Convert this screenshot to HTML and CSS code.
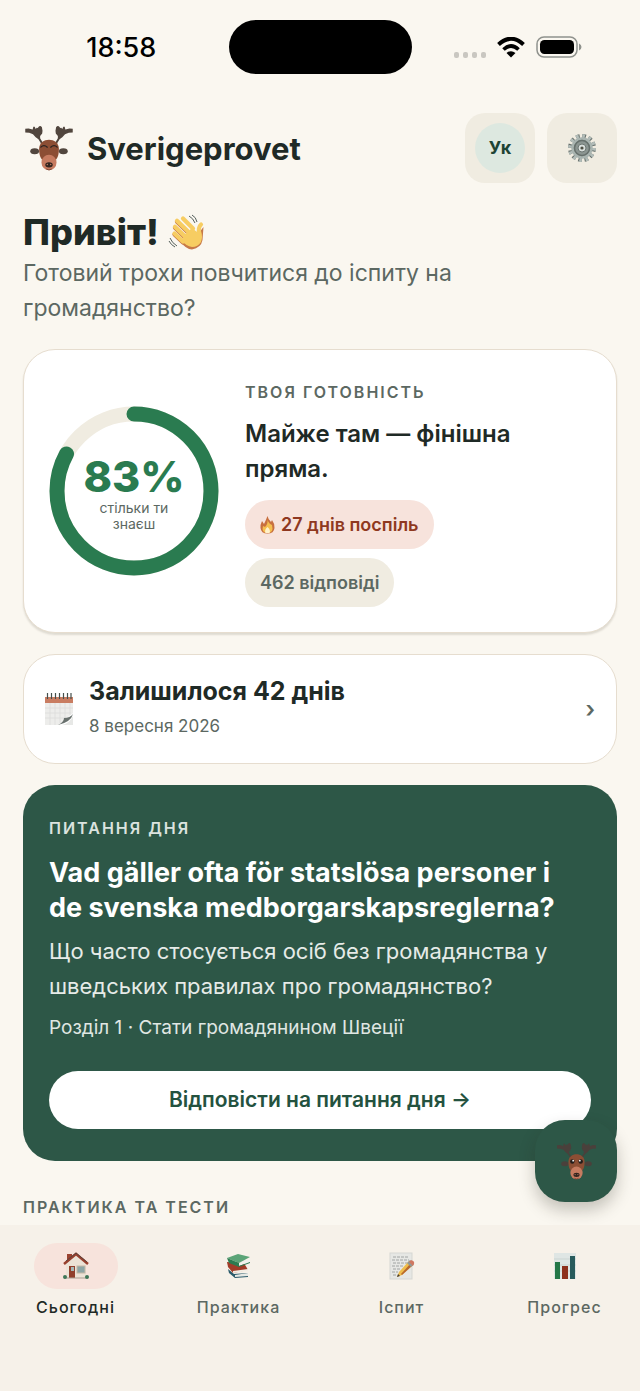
FILE: index.html
```html
<!DOCTYPE html>
<html lang="uk">
<head>
    <meta charset="UTF-8">
    <meta name="viewport" content="width=device-width, initial-scale=1.0">
    <title>Sverigeprovet</title>
    <link rel="stylesheet" href="styles.css">
</head>
<body>
    <svg class="defs" aria-hidden="true">
        <symbol id="moose-head" viewBox="0 0 140 132">
            <path id="antler" fill="var(--antler)" d="M0 8 L10 7 L22 10 L24 2 L28 2 L31 9 L34 5 L37 6 L41 1 L45 0 L49 3 L51 14 L50 22 L44 29 L44 36 L51 48 L47 52 L39 39 L31 33 L23 24 L12 20 L0 19 Z"/>
            <use href="#antler" transform="translate(140 0) scale(-1 1)"/>
            <ellipse cx="28" cy="74" rx="13" ry="9" fill="var(--antler)"/>
            <ellipse cx="112" cy="74" rx="13" ry="9" fill="var(--antler)"/>
            <path fill="#8c4e34" d="M41 67 C41 31 99 31 99 67 C99 87 95 106 70 106 C45 106 41 87 41 67 Z"/>
            <ellipse cx="70" cy="107" rx="22" ry="23" fill="#c67b60"/>
            <ellipse cx="70" cy="114" rx="11" ry="8" fill="#33251f"/>
            <circle cx="65" cy="113" r="2" fill="#c67b60"/>
            <circle cx="75" cy="113" r="2" fill="#c67b60"/>
            <path d="M62 126 Q70 132 78 126" fill="none" stroke="#5b2c20" stroke-width="2"/>
        </symbol>
    </svg>

    <div class="app">
        <div class="status-bar">
            <div class="status-time">18:58</div>
            <div class="island"></div>
            <div class="status-icons">
                <svg width="32" height="6" viewBox="0 0 32 6" fill="#c9c7c1">
                    <rect width="5" height="6" rx="2"/><rect x="9" width="5" height="6" rx="2"/>
                    <rect x="18" width="5" height="6" rx="2"/><rect x="27" width="5" height="6" rx="2"/>
                </svg>
                <svg class="wifi" width="28" height="21" viewBox="0 0 28 21">
                    <path d="M1.500 7.500 Q14 -4 26.500 7.500" fill="none" stroke="#000" stroke-width="4"/>
                    <path d="M6.500 12.500 Q14 5.500 21.500 12.500" fill="none" stroke="#000" stroke-width="3.700"/>
                    <path d="M9.500 16 Q14 12.500 18.500 16 L14 20.500 Z"/>
                </svg>
                <svg width="46" height="22" viewBox="0 0 46 22">
                    <rect x="1" y="1" width="40" height="20" rx="7" fill="none" stroke="#8f928d" stroke-width="1.500"/>
                    <rect x="4" y="4" width="34" height="14" rx="4.500"/>
                    <path d="M43 7.500 Q45.500 8.500 45.500 11 T43 14.500 Z" fill="#8f928d"/>
                </svg>
            </div>
        </div>

        <header class="header">
            <div class="brand">
                <svg class="moose" width="48" height="45" viewBox="0 0 140 132">
                    <use href="#moose-head"/>
                    <path d="M46 62 Q55 53 65 62 M75 62 Q85 53 94 62" fill="none" stroke="#2c2522" stroke-width="4" stroke-linecap="round"/>
                </svg>
                <span class="brand-name">Sverigeprovet</span>
            </div>
            <div class="header-actions">
                <button class="icon-button" aria-label="Мова"><span class="lang">Ук</span></button>
                <button class="icon-button" aria-label="Налаштування">
                    <svg width="30" height="30" viewBox="0 0 30 30">
                        <circle cx="15" cy="15" r="12" fill="none" stroke="#66706c" stroke-width="4" stroke-dasharray="3.600 2.683"/>
                        <circle cx="15" cy="15" r="12" fill="none" stroke="#b3bdb9" stroke-width="4" stroke-dasharray="2.600 3.683"/>
                        <circle cx="15" cy="15" r="9.500" fill="#8b9591" stroke="#a9b4b0" stroke-width="2.500"/>
                        <circle cx="15" cy="15" r="7.500" fill="#8b9591" stroke="#66706c" stroke-width="1.500"/>
                        <circle cx="15" cy="15" r="4" fill="#d9dfdc" stroke="#6d7773"/>
                        <circle cx="15" cy="15" r="1.600" fill="#4d4f43"/>
                    </svg>
                </button>
            </div>
        </header>

        <main class="content">
            <h1 class="greeting">
                Привіт!
                <svg width="36" height="36" viewBox="0 0 36 36">
                    <path d="M12 27 Q18 35.500 24 35.500 Q33 34 34.500 26 L35.500 13 L30 20 Z" fill="#c77a48"/>
                    <g stroke="#c77a48" stroke-width="4.200" stroke-linecap="round">
                        <path d="M6.500 20.500 L15 28.500"/><path d="M7 13.700 L17 23.500"/><path d="M9 7.700 L20 18.500"/>
                    </g>
                    <g stroke="#f7cd62" stroke-width="4.200" stroke-linecap="round" fill="none">
                        <path d="M6.500 19.500 L15 27.500"/><path d="M7 12.700 L17 22.500"/><path d="M9 6.700 L20 17.500"/><path d="M15 4.500 L25 14.500"/>
                        <path d="M33 10.500 Q30 13 31 21"/>
                    </g>
                    <path d="M14 27 L16 21 L24 14 L29 18 L33 17 Q35 23 33 28 Q30 33 24 33 Q18 32 14 27 Z" fill="#f7cd62"/>
                    <path d="M21 2 Q25 4 27 9 M24 1 Q28 3 29 8 M2 24 Q4 29 9 32 M1 27 Q3 31 7 33" fill="none" stroke="#55605c" stroke-width="1"/>
                </svg>
            </h1>
            <p class="subtitle">Готовий трохи повчитися до іспиту на громадянство?</p>

            <section class="card readiness">
                <div class="ring">
                    <svg viewBox="0 0 170 170">
                        <circle cx="85" cy="85" r="77" fill="none" stroke="#f0ece1" stroke-width="15"/>
                        <circle cx="85" cy="85" r="77" fill="none" stroke="#2a7b50" stroke-width="15" stroke-linecap="round" pathLength="100" stroke-dasharray="83 100" transform="rotate(-90 85 85)"/>
                    </svg>
                    <div class="ring-text">
                        <div class="ring-value">83%</div>
                        <div class="ring-label">стільки ти знаєш</div>
                    </div>
                </div>
                <div class="readiness-info">
                    <div class="eyebrow">Твоя готовність</div>
                    <h2 class="readiness-title">Майже там — фінішна пряма.</h2>
                    <div class="chips">
                        <span class="chip chip-streak">
                            <svg width="15" height="18" viewBox="0 0 15 18">
                                <path d="M7.500 0 Q8 3 11 6 L12 4 Q15 8 14.500 12 Q14 17.500 7.500 17.500 Q1 17.500 .500 12 Q0 9 2 5 L4 8 Q6 4 7.500 0 Z" fill="#c8703f"/>
                                <path d="M7.500 4 Q9 8 12 9 Q14 17 7.500 17 Q1 17 3 10 L5 11 Q8 8 7.500 4 Z" fill="#f5bf50"/>
                                <path d="M7.500 11 Q11 14 9.500 17 L5.500 17 Q4 14 7.500 11 Z" fill="#fff2cb"/>
                            </svg>
                            27 днів поспіль
                        </span>
                        <span class="chip">462 відповіді</span>
                    </div>
                </div>
            </section>

            <button class="card countdown">
                <svg width="28" height="32" viewBox="0 0 28 32">
                    <path d="M0 4 H28 V20 L14 32 H0 Z" fill="#ededeb"/>
                    <path d="M0 4 H28 V10 H0 Z" fill="#c97d62"/>
                    <path d="M0 15 H28 M0 20 H26 M0 25 H20 M5 10 V32 M10 10 V32 M15 10 V30 M20 10 V26 M25 10 V22" stroke="#dcdcda" stroke-width=".800"/>
                    <path d="M28 21 Q26 29 13 32 Q19 29 19 25 Q25 25 28 21 Z" fill="#69716e"/>
                    <path d="M28 23 Q25 30 17 32 H28 Z" fill="#e7e8e6"/>
                    <path d="M2.500 0 V6 M6.500 0 V6 M10.500 0 V6 M14.500 0 V6 M18.500 0 V6 M22.500 0 V6 M26 0 V6" stroke="#46504c" stroke-width="1.200"/>
                </svg>
                <span class="countdown-text">
                    <span class="countdown-title">Залишилося 42 днів</span>
                    <span class="countdown-date">8 вересня 2026</span>
                </span>
                <span class="chevron">›</span>
            </button>

            <section class="daily">
                <div class="eyebrow">Питання дня</div>
                <h2 class="daily-question" lang="sv">Vad gäller ofta för statslösa personer i de svenska medborgarskapsreglerna?</h2>
                <p class="daily-translation">Що часто стосується осіб без громадянства у шведських правилах про громадянство?</p>
                <p class="daily-chapter">Розділ 1 · Стати громадянином Швеції</p>
                <button class="daily-button">Відповісти на питання дня →</button>
            </section>

            <h2 class="eyebrow section-title">Практика та тести</h2>
        </main>

        <nav class="tab-bar">
            <button class="fab" aria-label="Помічник">
                <svg class="moose moose-dark" width="39" height="37" viewBox="0 0 140 132">
                    <use href="#moose-head"/>
                    <circle cx="55" cy="66" r="8" fill="#241d1b"/>
                    <circle cx="85" cy="66" r="8" fill="#241d1b"/>
                    <circle cx="58" cy="63" r="3" fill="#fff"/>
                    <circle cx="82" cy="63" r="3" fill="#fff"/>
                </svg>
            </button>
            <a class="tab active" href="#today">
                <span class="tab-icon">
                    <svg width="26" height="28" viewBox="0 0 26 28">
                        <path d="M4 2 H9 V10 H4 Z" fill="#9c4330"/>
                        <path d="M3 11 L13 3 L23 11 V26 H3 Z" fill="#ece2d6"/>
                        <path d="M1 12 L13 2 L25 12" fill="none" stroke="#993f2d" stroke-width="2.500"/>
                        <path d="M3 9 L13 1 L24 10" fill="none" stroke="#4b4440" stroke-width=".800"/>
                        <rect x="6" y="14" width="6" height="12" fill="#91402d"/>
                        <rect x="8" y="15" width="3" height="4" fill="#a5b9b8"/>
                        <rect x="14" y="14" width="8" height="7" fill="#8da5a5" stroke="#c5b8a6"/>
                        <path d="M1 26 H25" stroke="#a89f93"/>
                        <circle cx="2" cy="25" r="2" fill="#3e7658"/><circle cx="24" cy="25" r="2" fill="#3e7658"/>
                    </svg>
                </span>
                Сьогодні
            </a>
            <a class="tab" href="#practice">
                <span class="tab-icon">
                    <svg width="26" height="26" viewBox="0 0 26 26">
                        <path d="M2 16 L8 21 L22 20 V24 L9 25 L3 20 Z" fill="#2c5b6b"/>
                        <path d="M9 22 L22 20 V23 L9 24 Z" fill="#e5e8e4"/>
                        <path d="M1 9 L18 10 L22 17 L7 20 L2 14 Z" fill="#a13c28"/>
                        <path d="M7 18 L22 16 V18 L7 20 Z" fill="#f3eee5"/>
                        <path d="M1 5 L12 1 L24 4 L13 10 Z" fill="#5ba477"/>
                        <path d="M1 5 L13 10 V14 L3 10 Z" fill="#2b7b50"/>
                        <path d="M13 10 L24 6 V9 L13 13 Z" fill="#f1f3ee"/>
                        <path d="M13 13 L24 9 V10 L13 14 Z" fill="#2b7b50"/>
                    </svg>
                </span>
                Практика
            </a>
            <a class="tab" href="#exam">
                <span class="tab-icon">
                    <svg width="26" height="28" viewBox="0 0 26 28">
                        <rect x="1" y="1" width="22" height="26" fill="#e6e7e4" stroke="#d6d7d3"/>
                        <path d="M4 5 H19 M3 8 H20 M4 11 H18 M3 14 H15 M4 17 H12 M3 20 H9 M4 23 H8" stroke="#8f9592" stroke-width=".8" stroke-dasharray="3 1"/>
                        <path d="M10 20 L20 9 L24 13 L13 23 L8 25 Z" fill="#efbd4b"/>
                        <path d="M12 22 L22 11 L24 13 L13 23 Z" fill="#b8682e"/>
                        <path d="M18 11 L21 8 L25 12 L22 15 Z" fill="#8f9996"/>
                        <path d="M20 10 L22 8 Q26 9 25 12 L24 14 Z" fill="#d07861"/>
                        <path d="M8 25 L9 22 L11 24 Z" fill="#453b30"/>
                    </svg>
                </span>
                Іспит
            </a>
            <a class="tab" href="#progress">
                <span class="tab-icon">
                    <svg width="26" height="28" viewBox="0 0 26 28">
                        <rect x="2" y="1" width="22" height="26" fill="#dfe6e4"/>
                        <path d="M2 7 H24 M2 13 H24 M2 19 H24" stroke="#cbd5d2"/>
                        <rect x="3" y="10" width="5" height="17" fill="#247747"/>
                        <rect x="10" y="14" width="6" height="13" fill="#8d301c"/>
                        <rect x="18" y="4" width="5" height="23" fill="#285b5c"/>
                    </svg>
                </span>
                Прогрес
            </a>
        </nav>
    </div>
</body>
</html>
```
FILE: styles.css
```css
* {
    box-sizing: border-box;
}
body {
    margin: 0;
    font-family: Inter, 'Liberation Sans', sans-serif;
    background: #faf7f0;
    color: #1f2a26;
}
h1, h2, p {
    margin: 0;
}
button {
    font-family: inherit;
    border: none;
    padding: 0;
    cursor: pointer;
}
svg {
    flex-shrink: 0;
}
.defs {
    display: block;
    width: 0;
    height: 0;
}
.app {
    display: flex;
    flex-direction: column;
    min-height: 100vh;
}
.moose {
    --antler: #51463e;
}
.moose-dark {
    --antler: #4a403b;
}

/* Status bar */
.status-bar {
    display: grid;
    grid-template-columns: 1fr 183px 1fr;
    align-items: center;
    padding-top: 20px;
}
.status-time {
    padding-left: 14px;
    text-align: center;
    font-size: 27px;
    font-weight: 500;
    color: #000;
}
.island {
    height: 54px;
    border-radius: 27px;
    background: #000;
}
.status-icons {
    display: flex;
    justify-content: center;
    align-items: center;
    gap: 11px;
    padding-right: 16px;
}
.status-icons svg:first-child {
    align-self: flex-end;
}

/* Header */
.header {
    display: flex;
    justify-content: space-between;
    align-items: center;
    padding: 39px 23px 0;
}
.brand {
    display: flex;
    align-items: center;
    gap: 14px;
    padding-left: 2px;
}
.brand-name {
    font-size: 31px;
    font-weight: 700;
}
.header-actions {
    display: flex;
    gap: 12px;
}
.icon-button {
    display: flex;
    align-items: center;
    justify-content: center;
    width: 70px;
    height: 70px;
    border-radius: 20px;
    background: #f0ece1;
}
.lang {
    width: 50px;
    border-radius: 50%;
    background: #dde8e0;
    color: #1d4434;
    font-size: 18px;
    font-weight: 700;
    line-height: 50px;
}

/* Content */
.content {
    flex: 1;
    padding: 28px 23px 0;
}
.greeting {
    display: flex;
    align-items: center;
    gap: 9px;
    font-size: 36px;
    font-weight: 800;
    line-height: 42px;
}
.subtitle {
    margin: 3px 0 23px;
    font-size: 23px;
    line-height: 35px;
    color: #5c6862;
}
.card {
    width: 100%;
    background: #fff;
    border: 1px solid #e6ddcf;
    border-radius: 32px;
}
.eyebrow {
    font-size: 16px;
    font-weight: 600;
    line-height: 35px;
    letter-spacing: 2px;
    text-transform: uppercase;
    color: #5c6862;
}
.readiness {
    display: flex;
    align-items: center;
    gap: 26px;
    padding: 25px;
    box-shadow: 0 2px 2px rgba(60, 50, 30, 0.14);
}
.ring {
    position: relative;
    flex-shrink: 0;
    width: 170px;
    height: 170px;
}
.ring-text {
    position: absolute;
    inset: 0;
    display: flex;
    flex-direction: column;
    align-items: center;
    justify-content: center;
    gap: 4px;
    padding-top: 5px;
    text-align: center;
}
.ring-value {
    font-size: 43px;
    font-weight: 800;
    line-height: 40px;
    color: #2a7b50;
}
.ring-label {
    width: 90px;
    font-size: 14px;
    line-height: 16px;
    color: #5c6862;
}
.readiness-title {
    margin: 6px 0 14px;
    font-size: 24px;
    font-weight: 600;
    line-height: 35px;
}
.chips {
    display: flex;
    flex-direction: column;
    align-items: flex-start;
    gap: 9px;
}
.chip {
    display: flex;
    align-items: center;
    gap: 6px;
    padding: 0 15px;
    border-radius: 25px;
    background: #f0ece1;
    color: #5c6862;
    font-size: 18px;
    font-weight: 600;
    line-height: 49px;
}
.chip-streak {
    background: #f7e3dc;
    color: #8f3820;
}
.countdown {
    display: flex;
    align-items: center;
    gap: 16px;
    margin: 21px 0;
    padding: 19px 21px;
    color: #1f2a26;
    text-align: left;
}
.countdown-text {
    display: flex;
    flex-direction: column;
    flex: 1;
    line-height: 35px;
}
.countdown-title {
    font-size: 25px;
    font-weight: 700;
}
.countdown-date {
    font-size: 17px;
    color: #5c6862;
}
.chevron {
    font-size: 23px;
    font-weight: 600;
    color: #5c6862;
}

/* Question of the day */
.daily {
    padding: 26px 26px 32px;
    border-radius: 32px;
    background: #2d5747;
    color: #fff;
}
.daily .eyebrow {
    color: #dbe3df;
}
.daily-question {
    margin: 9px 0;
    font-size: 27px;
    font-weight: 700;
    line-height: 35px;
    text-wrap: balance;
}
.daily-translation {
    font-size: 22px;
    line-height: 35px;
    color: #e6ebe8;
}
.daily-chapter {
    margin: 6px 0 26px;
    font-size: 19px;
    line-height: 35px;
    color: #e0e7e3;
}
.daily-button {
    width: 100%;
    border-radius: 29px;
    background: #fff;
    color: #24523f;
    font-size: 21px;
    font-weight: 600;
    line-height: 58px;
}
.section-title {
    margin-top: 29px;
}

/* Tab bar */
.tab-bar {
    position: sticky;
    bottom: 0;
    display: grid;
    grid-template-columns: repeat(4, 1fr);
    gap: 12px;
    padding: 18px 0 72px;
    background: #f6f1e9;
}
.tab {
    display: flex;
    flex-direction: column;
    align-items: center;
    gap: 6px;
    font-size: 16px;
    font-weight: 500;
    line-height: 24px;
    letter-spacing: 1px;
    color: #5c6862;
    text-decoration: none;
}
.tab-icon {
    display: flex;
    align-items: center;
    justify-content: center;
    width: 84px;
    height: 46px;
    border-radius: 23px;
}
.tab.active {
    color: #1f2a26;
}
.tab.active .tab-icon {
    background: #f7e3dc;
}
.fab {
    position: absolute;
    top: -105px;
    right: 23px;
    display: flex;
    align-items: center;
    justify-content: center;
    width: 82px;
    height: 82px;
    border-radius: 30px;
    background: #2d5747;
    box-shadow: 0 8px 16px rgba(40, 35, 25, 0.25);
    clip-path: inset(-30px -30px -23px -30px);
}
```
